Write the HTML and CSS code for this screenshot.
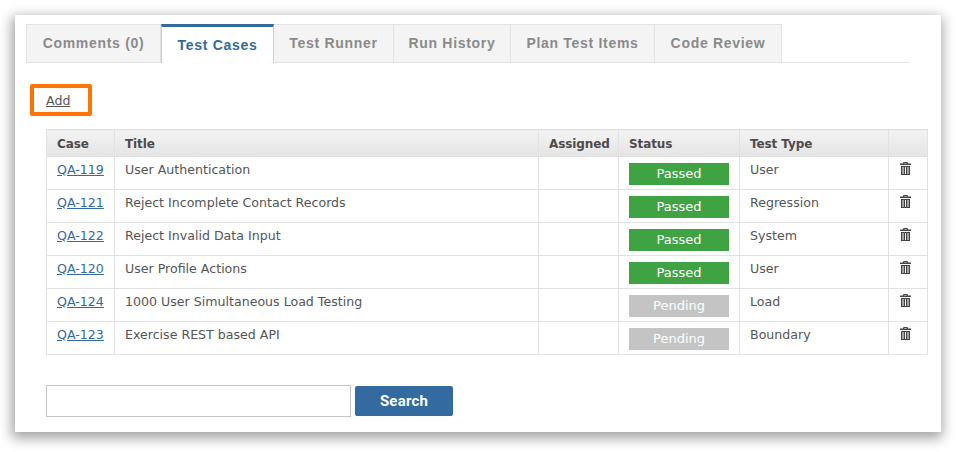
FILE: index.html
```html
<!DOCTYPE html>
<html lang="en">
<head>
<meta charset="utf-8">
<title>Test Cases</title>
<link rel="stylesheet" href="styles.css">
</head>
<body>
<svg class="sprite" width="0" height="0" aria-hidden="true">
  <symbol id="trash" viewBox="0 0 11 13">
    <path fill="#444" d="M3.5 0h4l.6 1.5H11V3H0V1.5h2.9L3.5 0zM4.3 1h2.4l.2.5H4.1L4.3 1zM1 4h9v9H1V4zm1.5 1v7h1V5h-1zm2.5 0v7h1V5H5zm2.5 0v7h1V5h-1z" fill-rule="evenodd"/>
  </symbol>
</svg>
<main class="panel">
  <nav class="tabs">
    <a class="tab">Comments (0)</a>
    <a class="tab tab-active">Test Cases</a>
    <a class="tab">Test Runner</a>
    <a class="tab">Run History</a>
    <a class="tab">Plan Test Items</a>
    <a class="tab">Code Review</a>
  </nav>
  <div class="add-row"><a class="add-link" href="#">Add</a></div>
  <table class="grid">
    <colgroup>
      <col class="c-case"><col class="c-title"><col class="c-assigned"><col class="c-status"><col class="c-type"><col class="c-del">
    </colgroup>
    <thead>
      <tr><th>Case</th><th>Title</th><th>Assigned</th><th>Status</th><th>Test Type</th><th></th></tr>
    </thead>
    <tbody>
      <tr><td><a href="#">QA-119</a></td><td>User Authentication</td><td></td><td><span class="badge passed">Passed</span></td><td>User</td><td class="del"><svg class="trash"><use href="#trash"/></svg></td></tr>
      <tr><td><a href="#">QA-121</a></td><td>Reject Incomplete Contact Records</td><td></td><td><span class="badge passed">Passed</span></td><td>Regression</td><td class="del"><svg class="trash"><use href="#trash"/></svg></td></tr>
      <tr><td><a href="#">QA-122</a></td><td>Reject Invalid Data Input</td><td></td><td><span class="badge passed">Passed</span></td><td>System</td><td class="del"><svg class="trash"><use href="#trash"/></svg></td></tr>
      <tr><td><a href="#">QA-120</a></td><td>User Profile Actions</td><td></td><td><span class="badge passed">Passed</span></td><td>User</td><td class="del"><svg class="trash"><use href="#trash"/></svg></td></tr>
      <tr><td><a href="#">QA-124</a></td><td>1000 User Simultaneous Load Testing</td><td></td><td><span class="badge pending">Pending</span></td><td>Load</td><td class="del"><svg class="trash"><use href="#trash"/></svg></td></tr>
      <tr><td><a href="#">QA-123</a></td><td>Exercise REST based API</td><td></td><td><span class="badge pending">Pending</span></td><td>Boundary</td><td class="del"><svg class="trash"><use href="#trash"/></svg></td></tr>
    </tbody>
  </table>
  <form class="search">
    <input class="search-input" type="text" aria-label="Search">
    <button class="search-btn" type="button">Search</button>
  </form>
</main>
</body>
</html>
```
FILE: styles.css
```css
html, body {
  margin: 0;
  padding: 0;
  background: #fff;
}
body {
  width: 956px;
  height: 452px;
  overflow: hidden;
  font-family: "DejaVu Sans", Verdana, sans-serif;
  font-size: 12.6px;
  color: #555;
}
.sprite {
  position: absolute;
}
.panel {
  box-sizing: border-box;
  width: 926px;
  height: 417px;
  margin: 15px 0 0 15px;
  padding: 9px 0 0 11px;
  background: #fff;
  box-shadow: -1px 4px 12px 2px rgba(0, 0, 0, 0.38);
}
.tabs {
  display: grid;
  grid-template-columns: 135px 113px 120px 117px 144px 127px;
  justify-content: start;
  box-sizing: border-box;
  width: 883px;
  height: 39px;
  border-bottom: 1px solid #e4e4e4;
}
.tab {
  box-sizing: border-box;
  height: 39px;
  padding-top: 10px;
  text-align: center;
  background: #f4f4f4;
  border: 1px solid #e2e2e2;
  border-left-width: 0;
  font-family: "Liberation Sans", Arial, sans-serif;
  font-weight: bold;
  font-size: 14px;
  letter-spacing: 0.7px;
  color: #8a8a8a;
  white-space: nowrap;
}
.tab:first-child {
  border-left-width: 1px;
}
.tab-active {
  background: #fff;
  color: #336a9f;
  border-top: 3px solid #336a9f;
  border-left: 1px solid #ccc;
  border-right: 1px solid #ccc;
  border-bottom: 0;
}
.add-row {
  display: flex;
  margin: 21px 0 0 4px;
}
.add-link {
  box-sizing: border-box;
  width: 62px;
  height: 32px;
  padding: 5px 0 0 12px;
  border: 4px solid #ff7300;
  border-radius: 2px;
  color: #555;
  line-height: 15px;
}
.grid {
  width: 882px;
  margin: 13px 0 0 20px;
  border-collapse: collapse;
  table-layout: fixed;
}
.c-case { width: 68px; }
.c-title { width: 424px; }
.c-assigned { width: 80px; }
.c-status { width: 121px; }
.c-type { width: 149px; }
.c-del { width: 39px; }
.grid th, .grid td {
  border: 1px solid #e2e2e2;
  padding: 0 10px;
  text-align: left;
}
.grid th {
  height: 25px;
  padding-top: 1px;
  background: linear-gradient(#f3f3f3, #e4e4e4);
  color: #4f4a4a;
  font-size: 12px;
  font-weight: bold;
  letter-spacing: -0.1px;
}
.grid td {
  height: 33px;
  padding-top: 5px;
  padding-bottom: 0;
  box-sizing: border-box;
  line-height: 16px;
  vertical-align: top;
}
.grid td a {
  color: #336a9f;
}
.badge {
  display: block;
  width: 100px;
  height: 22px;
  line-height: 22px;
  margin-top: 1px;
  text-align: center;
  color: #fff;
  font-size: 13px;
}
.passed { background: #3fa344; }
.pending { background: #c4c4c4; }
.grid td.del {
  padding: 5px 0 0 11px;
}
.trash {
  display: block;
  width: 11px;
  height: 13px;
}
.search {
  display: flex;
  align-items: center;
  margin: 30px 0 0 20px;
  gap: 4px;
}
.search-input {
  box-sizing: border-box;
  width: 305px;
  height: 32px;
  margin: 0;
  padding: 0 4px;
  border: 1px solid #c4c4c4;
  background: #fff;
}
.search-btn {
  box-sizing: border-box;
  width: 98px;
  height: 30px;
  padding: 0;
  border: 0;
  border-radius: 2px;
  background: #336a9f;
  color: #fff;
  font-family: Roboto, "Liberation Sans", sans-serif;
  font-size: 15px;
  letter-spacing: 0.2px;
  font-weight: bold;
}
```
